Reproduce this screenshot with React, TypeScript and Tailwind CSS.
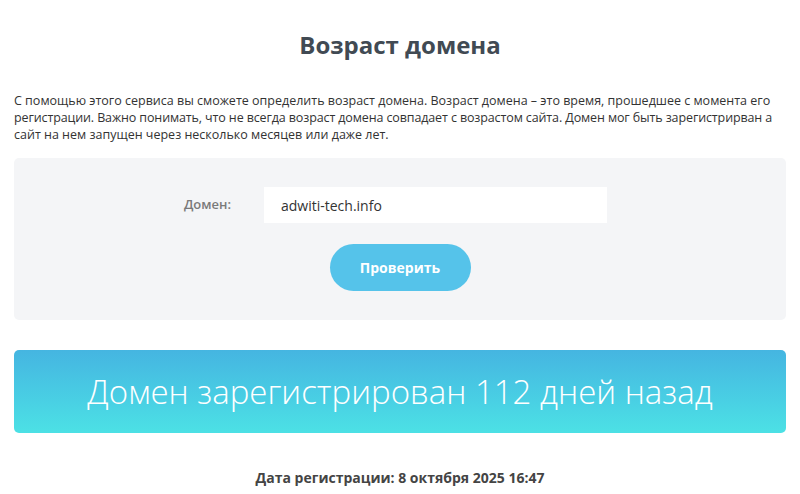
export default function App() {
  return (
    <div className="min-h-[494px] bg-white px-[14px] font-['Open_Sans',sans-serif] text-[#333]">
      <h1 className="pt-[30px] text-center text-[24px] font-bold leading-[30px] text-[#414a53]">
        Возраст домена
      </h1>

      <p className="mt-[32px] whitespace-nowrap text-[12.5px] leading-[17px] text-[#333]">
        С помощью этого сервиса вы сможете определить возраст домена. Возраст домена – это время, прошедшее с момента его
        <br />
        <span className="tracking-[-0.12px]">
          регистрации. Важно понимать, что не всегда возраст домена совпадает с возрастом сайта. Домен мог быть зарегистрирван а
        </span>
        <br />
        сайт на нем запущен через несколько месяцев или даже лет.
      </p>

      <div className="mt-[15px] h-[162px] rounded-[5px] bg-[#f4f5f7] pt-[29px]">
        <div className="flex items-center">
          <label className="w-[218px] pr-[1px] text-right text-[13px] font-semibold text-[#7a7a7a]">
            Домен:
          </label>
          <input
            className="ml-[32px] h-[36px] w-[343px] bg-white px-[17px] text-[14px] text-[#333] outline-none"
            defaultValue="adwiti-tech.info"
          />
        </div>
        <div className="flex justify-center">
          <button className="mt-[21px] h-[47px] w-[141px] rounded-full bg-[#55c3ea] text-[14px] font-bold text-white">
            Проверить
          </button>
        </div>
      </div>

      <div className="mt-[30px] flex h-[83px] items-center justify-center rounded-[5px] bg-gradient-to-b from-[#45b5e1] to-[#4ce1e5]">
        <span className="text-[33px] font-light text-white">Домен зарегистрирован 112 дней назад</span>
      </div>

      <p className="mt-[34px] text-center text-[14px] font-bold text-[#444]">
        Дата регистрации: 8 октября 2025 16:47
      </p>
    </div>
  )
}
